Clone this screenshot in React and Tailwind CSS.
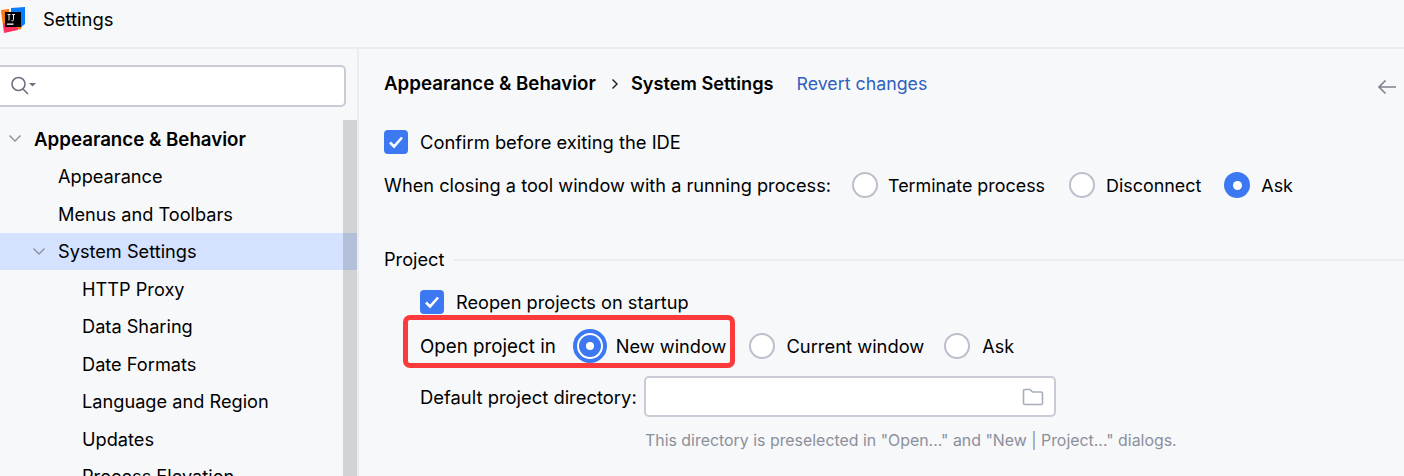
import React from "react";

const treeRows = [
  { label: "Appearance & Behavior", indent: "pl-[34px]", bold: true, arrow: "left-[8px]" },
  { label: "Appearance", indent: "pl-[58px]" },
  { label: "Menus and Toolbars", indent: "pl-[58px]" },
  { label: "System Settings", indent: "pl-[58px]", selected: true, arrow: "left-[32px]" },
  { label: "HTTP Proxy", indent: "pl-[82px]" },
  { label: "Data Sharing", indent: "pl-[82px]" },
  { label: "Date Formats", indent: "pl-[82px]" },
  { label: "Language and Region", indent: "pl-[82px]" },
  { label: "Updates", indent: "pl-[82px]" },
  { label: "Process Elevation", indent: "pl-[82px]" },
];

const Chevron = ({ className }) => (
  <svg className={className} width="14" height="14" viewBox="0 0 14 14" fill="none" stroke="#8c8f9c" strokeWidth="1.4">
    <path d="M1.5 4.5 7 10l5.5-5.5" />
  </svg>
);

const Checkbox = () => (
  <span className="w-[24px] h-[24px] rounded-[4px] bg-[#3b78f2] flex items-center justify-center shrink-0">
    <svg width="16" height="14" viewBox="0 0 16 14" fill="none" stroke="white" strokeWidth="2.6">
      <path d="M2 7.5 6 11.5 14 2.5" />
    </svg>
  </span>
);

const Radio = ({ label, checked, className = "", labelClass = "text-[17.9px]" }) => (
  <div className={`flex items-center gap-[11px] ${className}`}>
    {checked ? (
      <span className="w-[26px] h-[26px] rounded-full bg-[#3b78f2] flex items-center justify-center shrink-0">
        <span className="w-[9px] h-[9px] rounded-full bg-white" />
      </span>
    ) : (
      <span className="w-[26px] h-[26px] rounded-full border-2 border-[#bcbfcc] bg-white shrink-0" />
    )}
    <span className={labelClass}>{label}</span>
  </div>
);

export default function App() {
  return (
    <div className="w-[1404px] h-[476px] overflow-hidden bg-[#f7f8fa] text-[18.2px] text-black font-['Inter','Noto_Sans',sans-serif] relative">
      {/* title bar */}
      <div className="h-[49px] border-b-2 border-[#ebecf0] flex items-center">
        <svg className="ml-[1px] -mt-[7px]" width="25" height="26" viewBox="0 0 25 26">
          <path d="M0 3 8 2 8 22 3 24 1 12Z" fill="#f97a12" />
          <path d="M10 1 24 0 24 17 19 21 10 16Z" fill="#087cfa" />
          <path d="M2 16 18 20 17 23 3 26Z" fill="#fe315d" />
          <path d="M15 20 21 20 19 23Z" fill="#f97a12" />
          <rect x="4" y="5" width="16" height="15" fill="#000" />
          <rect x="6" y="16.5" width="6.5" height="1.3" fill="#fff" />
          <path d="M6.5 7.5h3M8 7.5v6M11 7.5h3M12.5 7.5v5a1 1 0 0 1-2 0.6" fill="none" stroke="#fff" strokeWidth="0.9" />
        </svg>
        <span className="ml-[17px] -mt-[7px] text-[18.4px]">Settings</span>
      </div>

      <div className="flex h-[427px]">
        {/* sidebar */}
        <div className="w-[359px] shrink-0 border-r-2 border-[#ebecf0] relative">
          <div className="h-[42px] w-[353px] -ml-[7px] mt-[16px] bg-white border-2 border-[#c9ccd6] rounded-[5px] flex items-center pl-[15px]">
            <svg width="26" height="22" viewBox="0 0 26 22" fill="none" stroke="#6c707e" strokeWidth="1.6">
              <circle cx="8.5" cy="9" r="6.5" />
              <path d="M13 14 18 19" />
              <path d="M19 8h7l-3.5 3.5z" fill="#6c707e" stroke="none" />
            </svg>
          </div>
          <div className="mt-[13px] relative">
            {treeRows.map((row) => (
              <div
                key={row.label}
                className={`h-[37.5px] flex items-center relative whitespace-nowrap ${row.indent} ${row.bold ? "font-semibold text-[18.7px] pt-[3px]" : "pt-[1px]"} ${row.selected ? "bg-[#d4e2ff]" : ""}`}
              >
                {row.arrow && <Chevron className={`absolute top-[11px] ${row.arrow}`} />}
                {row.label}
              </div>
            ))}
            <div className="absolute top-0 right-0 w-[14px] h-[400px] bg-black/15" />
          </div>
        </div>

        {/* content */}
        <div className="flex-1 min-w-0 relative pl-[25px] pt-[16px]">
          <div className="h-[38px] flex items-center whitespace-nowrap">
            <span className="font-semibold text-[18.7px]">Appearance &amp; Behavior</span>
            <svg className="ml-[15px]" width="8" height="12" viewBox="0 0 8 12" fill="none" stroke="#27282e" strokeWidth="1.5">
              <path d="M1.5 1.5 6 6l-4.5 4.5" />
            </svg>
            <span className="font-semibold text-[18.2px] ml-[12px]">System Settings</span>
            <span className="text-[#315fbd] text-[17.8px] ml-[23px]">Revert changes</span>
            <svg className="absolute right-[7px] top-[30px]" width="20" height="16" viewBox="0 0 20 16" fill="none" stroke="#7e818e" strokeWidth="1.6">
              <path d="M19 8H2M8.5 1.5 2 8l6.5 6.5" />
            </svg>
          </div>

          <div className="mt-[27px] h-[24px] flex items-center gap-[12px]">
            <Checkbox />
            <span className="text-[18.35px] pt-[2px]">Confirm before exiting the IDE</span>
          </div>

          <div className="mt-[18px] h-[26px] flex items-center whitespace-nowrap">
            <span className="pt-[2px]">When closing a tool window with a running process:</span>
            <Radio label="Terminate process" labelClass="text-[17.9px] pt-[2px] -ml-[1px]" className="ml-[21px]" />
            <Radio label="Disconnect" labelClass="text-[17.9px] pt-[2px]" className="ml-[24px]" />
            <Radio label="Ask" checked labelClass="text-[17.9px] pt-[2px]" className="ml-[23px]" />
          </div>

          <div className="mt-[48px] flex items-center gap-[10px]">
            <span>Project</span>
            <div className="flex-1 h-[2px] bg-[#ebecf0]" />
          </div>

          <div className="pl-[36px]">
            <div className="mt-[17px] h-[24px] flex items-center gap-[12px]">
              <Checkbox />
              <span>Reopen projects on startup</span>
            </div>

            <div className="mt-[19px] h-[26px] flex items-center whitespace-nowrap">
              <span className="text-[18.75px] pt-[2px]">Open project in</span>
              <div className="ml-[17px] flex items-center gap-[9px]">
                <span className="w-[34px] h-[34px] rounded-full border-[4px] border-[#3b78f2] bg-white flex items-center justify-center shrink-0">
                  <span className="w-[22px] h-[22px] rounded-full bg-[#3b78f2] flex items-center justify-center">
                    <span className="w-[8px] h-[8px] rounded-full bg-white" />
                  </span>
                </span>
                <span>New window</span>
              </div>
              <Radio label="Current window" labelClass="text-[18.35px]" className="ml-[23px]" />
              <Radio label="Ask" labelClass="text-[18px] ml-[1px]" className="ml-[20px]" />
            </div>

            <div className="mt-[17px] flex items-center">
              <span className="whitespace-nowrap text-[18.4px] pt-[2px]">Default project directory:</span>
              <div className="ml-[7px] w-[412px] h-[41px] bg-white border-2 border-[#c9ccd6] rounded-[5px] flex items-center justify-end pr-[10px]">
                <svg width="22" height="20" viewBox="0 0 22 20" fill="none" stroke="#a8adbd" strokeWidth="1.6">
                  <path d="M1.5 4a1.5 1.5 0 0 1 1.5-1.5h5L10.5 5H19a1.5 1.5 0 0 1 1.5 1.5V16a1.5 1.5 0 0 1-1.5 1.5H3A1.5 1.5 0 0 1 1.5 16z" />
                </svg>
              </div>
            </div>

            <div className="mt-[12px] ml-[225px] text-[15.9px] text-[#8c8f9c] whitespace-nowrap">
              This directory is preselected in "Open..." and "New | Project..." dialogs.
            </div>
          </div>
        </div>
      </div>

      {/* red annotation box */}
      <div className="absolute left-[403px] top-[315px] w-[332px] h-[53px] border-[5px] border-[#fb3b3b] rounded-[7px]" />
    </div>
  );
}
